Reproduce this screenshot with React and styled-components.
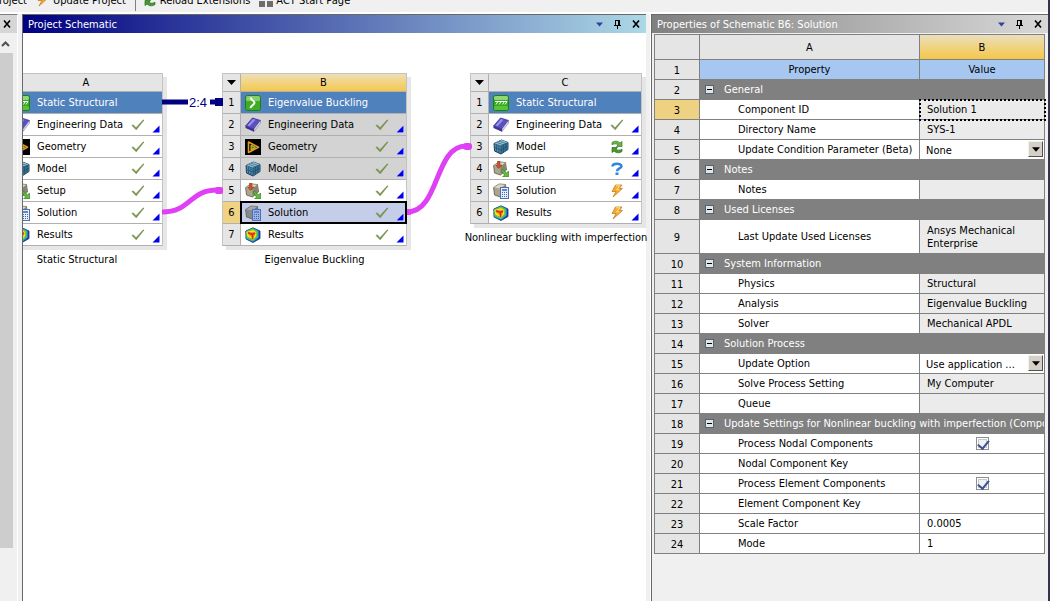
import { useState } from "react";
import styled, { createGlobalStyle, css } from "styled-components";

const GlobalStyle = createGlobalStyle`
  * {
    box-sizing: border-box;
  }
  body {
    margin: 0;
    overflow: hidden;
    background: #f0f0f0;
    color: #000;
    font-family: Tahoma, "DejaVu Sans Condensed", "Noto Sans", sans-serif;
    font-size: 11px;
    line-height: 13px;
  }
  button, select, input {
    font: inherit;
    color: inherit;
    margin: 0;
    padding: 0;
  }
  button {
    border: 0;
    background: none;
  }
`;

/* ---------- icons ---------- */

const StructuralIcon = () => (
  <svg width="16" height="16" viewBox="0 0 16 16">
    <rect x="0.5" y="0.5" width="15" height="15" rx="2" fill="#36a81f" stroke="#1d7f16" />
    <rect x="1" y="1" width="14" height="4" rx="1.5" fill="#8fd873" />
    <rect x="1" y="11" width="14" height="4" rx="1.5" fill="#56c52e" />
    <path d="M2 6.5h12" stroke="#fff" />
    <path d="M3 9.5l2-3M6.200 9.500l2-3M9.400 9.500l2-3M12 9.500l2-3" stroke="#fff" />
  </svg>
);

const BucklingIcon = () => (
  <svg width="16" height="16" viewBox="0 0 16 16">
    <rect x="0.5" y="0.5" width="15" height="15" rx="2" fill="#3dad22" stroke="#1d7f16" />
    <rect x="1" y="1" width="14" height="5" rx="1.5" fill="#85cf68" />
    <path d="M5.500 2.500C6 5 9.500 6 9.500 7.800S6 10.500 5.500 13" fill="none" stroke="#fff" strokeWidth="2" />
  </svg>
);

const BookIcon = () => (
  <svg width="16" height="16" viewBox="0 0 16 16">
    <path d="M0.500 9L7.500 1l8 2.500L9 12z" fill="#5a50c0" stroke="#3a2f96" strokeWidth="0.8" />
    <path d="M2.500 8.500l5.500-6.500 2.500 0.800-6 6.500z" fill="#9a92ea" />
    <path d="M9 12l6.500-8.500v2.500L9 14.500z" fill="#e4e4f2" stroke="#7a73b0" strokeWidth="0.6" />
    <path d="M0.500 9v2L9 14.800V12z" fill="#3c3191" />
  </svg>
);

const GeometryIcon = () => (
  <svg width="16" height="16" viewBox="0 0 16 16">
    <rect width="16" height="16" fill="#000" />
    <path d="M3.500 3v10.500L13.500 8.200z" fill="#000" stroke="#e39a1c" strokeWidth="1.6" strokeLinejoin="round" />
    <path d="M6 6v5l4.500-2.700z" fill="#2f9e3c" stroke="#e8bd2e" strokeWidth="1" />
  </svg>
);

const ModelIcon = () => (
  <svg width="16" height="16" viewBox="0 0 16 16">
    <path d="M1 4.500L8.500 1 15 3.500v7L8 15 1.500 12z" fill="#4a89ae" stroke="#1f4258" strokeLinejoin="round" />
    <path d="M1 4.500L8.500 1 15 3.500 8 7z" fill="#8fc4df" />
    <path d="M8 7l7-3.500v7L8 15z" fill="#356f93" />
    <path
      d="M1 4.500L8 7l7-3.500M8 7v8M1.200 8.200L8 11l7-4M3.500 5.500v7M5.800 6.200V14M10.500 5.800v7.700M13 4.500v7.200M3.500 3.400L10.500 5.800M6 2.200l7 2.300"
      fill="none"
      stroke="#20485f"
      strokeWidth="0.6"
    />
  </svg>
);

const Block = ({ dim }) => (
  <>
    <path
      d="M0.600 4.500L6 1l6.500 0.500L13.500 9 7.500 14l-6-2z"
      fill={dim ? "#85888c" : "#aaa58e"}
      stroke="#5c5848"
      strokeWidth="0.8"
      strokeLinejoin="round"
    />
    <path d="M1 4.500L6 1.300l6.300 0.500L7.500 5.500z" fill={dim ? "#a3a7ad" : "#dbd7c4"} />
    <path d="M7.500 5.500l4.800-3.600 0.900 7L7.500 13.600z" fill={dim ? "#6d7076" : "#8a8570"} />
  </>
);

const SetupIcon = () => (
  <svg width="16" height="16" viewBox="0 0 16 16">
    <Block />
    <path d="M4.500 0h2.500v4h2L5.700 7.500 2.500 4h2z" fill="#c9512c" stroke="#8d3218" strokeWidth="0.5" />
    <path
      d="M8 9.300L9.500 8l4 4 2-2v6H9.500l2-2z"
      fill="#62b93a"
      stroke="#2b7418"
      strokeWidth="0.6"
      strokeLinejoin="round"
    />
  </svg>
);

const SolutionIcon = ({ dim }) => (
  <svg width="16" height="16" viewBox="0 0 16 16">
    <Block dim={dim} />
    <rect x="7.5" y="4.5" width="8" height="11" fill={dim ? "#9db1e2" : "#e6eefc"} stroke="#4a70b5" />
    <rect x="9" y="6" width="5" height="2" fill="#5f86cc" />
    <path d="M9 9.500h5M9 11.500h5M9 13.500h5" stroke="#4468ae" strokeDasharray="1 1" />
  </svg>
);

const ResultsIcon = () => (
  <svg width="16" height="16" viewBox="0 0 16 16">
    <path d="M0.800 4L8 0.800 15 4v7.500L8 15.500 1 12z" fill="#2445b8" stroke="#1b2f70" strokeWidth="0.8" />
    <path d="M1 4.200L8 1l5.500 3v6.500L8 14.800 1.300 11.800z" fill="#28b8b0" />
    <path d="M1.200 4.400L8 1.500l4.200 2.800v5.500L8 13.500 2 11z" fill="#6cc62c" />
    <path d="M1.500 5L8 3l3.200 2v4L8 12.500 2.300 9.500z" fill="#f7e11f" />
    <path d="M2.500 5.500L7.500 5l3 0.500-0.800 3L8 11.500 6 9.500 3.500 8z" fill="#f39220" />
    <path d="M3 5.800l4.500 1.700L10 6M7.500 7.500V12" fill="none" stroke="#d42a12" strokeWidth="1.5" />
  </svg>
);

const CheckIcon = () => (
  <svg width="14" height="12" viewBox="0 0 14 12">
    <path d="M1 6.500l1.300-.6L5 8.800 12.200 1h0.800L5.200 10.800z" fill="#7f9a50" stroke="#66803c" strokeWidth="0.6" />
  </svg>
);

const RefreshIcon = () => (
  <svg width="14" height="14" viewBox="0 0 14 14">
    <path
      d="M2 2.500C5 0.500 8 1 10 3L12 1.500V6.500H6.500l1.700-1.700C6.500 3.600 4 3.500 2 4.800z"
      fill="#6cb544"
      stroke="#37761f"
      strokeWidth="0.7"
    />
    <path
      d="M12 11.500C9 13.500 6 13 4 11L2 12.500V7.500h5.500L5.800 9.200C7.500 10.400 10 10.500 12 9.200z"
      fill="#459c2c"
      stroke="#2c691a"
      strokeWidth="0.7"
    />
  </svg>
);

const QuestionIcon = () => (
  <svg width="14" height="14" viewBox="0 0 14 14">
    <path
      d="M2.500 4.500C2.500 0.800 11.500 0.800 11.500 4.200c0 2.300-4.500 2.200-4.500 5"
      fill="none"
      stroke="#2f86e0"
      strokeWidth="2.5"
    />
    <rect x="5.5" y="10.5" width="3" height="2.500" fill="#2f86e0" />
  </svg>
);

const BoltIcon = () => (
  <svg width="14" height="14" viewBox="0 0 14 14">
    <path d="M5.500 1H12L9.500 4.500H12.500L3 13l3-5.500H2z" fill="#f5ab2e" stroke="#bf7618" strokeWidth="0.7" />
    <path d="M6 1.800h4L6.500 5.800h3" fill="none" stroke="#ffe08a" />
  </svg>
);

const CaretIcon = ({ color = "#000", size = 9 }) => (
  <svg width={size} height="5" viewBox="0 0 9 5">
    <path d="M0 0h9L4.500 5z" fill={color} />
  </svg>
);

const PinIcon = () => (
  <svg width="7" height="9" viewBox="0 0 7 9" shapeRendering="crispEdges">
    <path d="M1 0h5v5h1v1H4v3H3V6H0V5h1zM2 1v4h2V1z" fill="#000" fillRule="evenodd" />
  </svg>
);

const CloseIcon = () => (
  <svg width="8" height="8" viewBox="0 0 8 8">
    <path d="M1 0.500l6 7M7 0.500l-6 7" stroke="#000" strokeWidth="1.6" />
  </svg>
);

const TilesIcon = () => (
  <svg width="14" height="13" viewBox="0 0 14 13">
    <path d="M0 0h6v6H0zM8 0h6v6H8zM0 7h6v6H0zM8 7h6v6H8z" fill="#6d6d6d" />
  </svg>
);

const ICONS = {
  structural: StructuralIcon,
  buckling: BucklingIcon,
  book: BookIcon,
  geometry: GeometryIcon,
  model: ModelIcon,
  setup: SetupIcon,
  solution: SolutionIcon,
  results: ResultsIcon,
};

const STATUS = {
  ok: CheckIcon,
  refresh: RefreshIcon,
  unknown: QuestionIcon,
  update: BoltIcon,
};

/* ---------- data ---------- */

const SYSTEMS = [
  {
    id: "A",
    left: -32,
    width: 172,
    name: "Static Structural",
    rows: [
      { icon: "structural", label: "Static Structural" },
      { icon: "book", label: "Engineering Data", status: "ok" },
      { icon: "geometry", label: "Geometry", status: "ok" },
      { icon: "model", label: "Model", status: "ok" },
      { icon: "setup", label: "Setup", status: "ok" },
      { icon: "solution", label: "Solution", status: "ok" },
      { icon: "results", label: "Results", status: "ok" },
    ],
  },
  {
    id: "B",
    left: 199,
    width: 185,
    active: true,
    name: "Eigenvalue Buckling",
    rows: [
      { icon: "buckling", label: "Eigenvalue Buckling" },
      { icon: "book", label: "Engineering Data", status: "ok", shared: true },
      { icon: "geometry", label: "Geometry", status: "ok", shared: true },
      { icon: "model", label: "Model", status: "ok", shared: true },
      { icon: "setup", label: "Setup", status: "ok" },
      { icon: "solution", label: "Solution", status: "ok", selected: true },
      { icon: "results", label: "Results", status: "ok" },
    ],
  },
  {
    id: "C",
    left: 447,
    width: 172,
    name: "Nonlinear buckling with imperfection",
    rows: [
      { icon: "structural", label: "Static Structural" },
      { icon: "book", label: "Engineering Data", status: "ok" },
      { icon: "model", label: "Model", status: "refresh" },
      { icon: "setup", label: "Setup", status: "unknown" },
      { icon: "solution", label: "Solution", status: "update" },
      { icon: "results", label: "Results", status: "update" },
    ],
  },
];

const PROPERTIES = [
  { group: "General" },
  { name: "Component ID", value: "Solution 1", readOnly: true, selected: true },
  { name: "Directory Name", value: "SYS-1", readOnly: true },
  { name: "Update Condition Parameter (Beta)", options: ["None"] },
  { group: "Notes" },
  { name: "Notes", value: "", readOnly: true },
  { group: "Used Licenses" },
  { name: "Last Update Used Licenses", value: "Ansys Mechanical Enterprise", readOnly: true, tall: true },
  { group: "System Information" },
  { name: "Physics", value: "Structural", readOnly: true },
  { name: "Analysis", value: "Eigenvalue Buckling", readOnly: true },
  { name: "Solver", value: "Mechanical APDL", readOnly: true },
  { group: "Solution Process" },
  { name: "Update Option", options: ["Use application ..."] },
  { name: "Solve Process Setting", value: "My Computer", readOnly: true },
  { name: "Queue", value: "", readOnly: true },
  { group: "Update Settings for Nonlinear buckling with imperfection (Component)" },
  { name: "Process Nodal Components", checked: true },
  { name: "Nodal Component Key", value: "" },
  { name: "Process Element Components", checked: true },
  { name: "Element Component Key", value: "" },
  { name: "Scale Factor", value: "0.0005" },
  { name: "Mode", value: "1" },
];

/* ---------- components ---------- */

function PanelControls() {
  return (
    <Controls>
      <IconButton aria-label="Menu">
        <CaretIcon color="#33409c" size={7} />
      </IconButton>
      <IconButton aria-label="Pin">
        <PinIcon />
      </IconButton>
      <IconButton aria-label="Close">
        <CloseIcon />
      </IconButton>
    </Controls>
  );
}

function System({ system }) {
  return (
    <Node $left={system.left} $width={system.width}>
      <Card>
        <CardRow $header>
          <CardIndex as="button" aria-label={`System ${system.id} menu`}>
            <CaretIcon />
          </CardIndex>
          <CardLetter $active={system.active}>{system.id}</CardLetter>
        </CardRow>
        {system.rows.map((row, i) => {
          const Icon = ICONS[row.icon];
          const Status = STATUS[row.status];
          return (
            <CardRow key={row.label + i}>
              <CardIndex $selected={row.selected}>{i + 1}</CardIndex>
              <Cell $title={i === 0} $shared={row.shared} $selected={row.selected}>
                <Icon dim={row.selected} />
                <CellLabel>{row.label}</CellLabel>
                {Status && <Status />}
                {Status && (
                  <Corner viewBox="0 0 8 8">
                    <path d="M8 0v8H0z" fill="#fff" />
                    <path d="M7.500 0.500v7h-7z" fill="#0000f0" />
                  </Corner>
                )}
              </Cell>
            </CardRow>
          );
        })}
      </Card>
      <Caption>{system.name}</Caption>
    </Node>
  );
}

function Links() {
  return (
    <LinkLayer width="623" height="300">
      <path d="M139 69h26M187 69h6" stroke="#000080" strokeWidth="5" />
      <rect x="192" y="65" width="8" height="8" fill="#000080" />
      <text x="166" y="74" fill="#000080" fontFamily="Liberation Sans, Arial, sans-serif" fontSize="13">
        2:4
      </text>
      <g fill="none" stroke="#e040f5" strokeWidth="5">
        <path d="M139 179C168 179 166 157 194 157" />
        <path d="M384 179C417 179 411 113 443 113" />
      </g>
      <g fill="#e040f5">
        <rect x="192" y="154" width="8" height="7" rx="2" />
        <rect x="440" y="110" width="9" height="7" rx="3" />
        <rect x="384" y="176" width="4" height="6" />
      </g>
    </LinkLayer>
  );
}

function PropertyValue({ prop, id }) {
  const [checked, setChecked] = useState(Boolean(prop.checked));

  if (prop.options) {
    return (
      <SelectWrap>
        <Select id={id}>
          {prop.options.map((o) => (
            <option key={o}>{o}</option>
          ))}
        </Select>
        <SelectArrow>
          <CaretIcon size={8} />
        </SelectArrow>
      </SelectWrap>
    );
  }
  if ("checked" in prop) {
    return <Checkbox id={id} type="checkbox" checked={checked} onChange={() => setChecked(!checked)} />;
  }
  if (prop.readOnly) {
    return prop.value;
  }
  return <TextInput id={id} type="text" defaultValue={prop.value} />;
}

function PropertyTable() {
  return (
    <TableWrap>
      <Table>
        <colgroup>
          <IndexCol />
          <NameCol />
          <col />
        </colgroup>
        <thead>
          <tr>
            <HeadCell />
            <HeadCell>A</HeadCell>
            <HeadCell $active>B</HeadCell>
          </tr>
          <tr>
            <NumberCell>1</NumberCell>
            <TitleCell>Property</TitleCell>
            <TitleCell>Value</TitleCell>
          </tr>
        </thead>
        <tbody>
          {PROPERTIES.map((prop, i) => {
            const id = `prop-${i + 2}`;
            return (
              <tr key={id}>
                <NumberCell $selected={prop.selected}>{i + 2}</NumberCell>
                {prop.group ? (
                  <GroupCell colSpan={2}>
                    <GroupInner>
                      <Expander aria-label={`Collapse ${prop.group}`} />
                      {prop.group}
                    </GroupInner>
                  </GroupCell>
                ) : (
                  <>
                    <NameCell $tall={prop.tall}>
                      {prop.readOnly ? prop.name : <label htmlFor={id}>{prop.name}</label>}
                    </NameCell>
                    <ValueCell
                      $readOnly={prop.readOnly}
                      $selected={prop.selected}
                      $center={"checked" in prop}
                      $flush={Boolean(prop.options)}>
                      <PropertyValue prop={prop} id={id} />
                    </ValueCell>
                  </>
                )}
              </tr>
            );
          })}
        </tbody>
      </Table>
    </TableWrap>
  );
}

function App() {
  return (
    <Page>
      <GlobalStyle />
      <Toolbar>
        <ToolButton $clipped>Refresh Project</ToolButton>
        <ToolButton>
          <BoltIcon />
          Update Project
        </ToolButton>
        <ToolDivider />
        <ToolButton>
          <RefreshIcon />
          Reload Extensions
        </ToolButton>
        <ToolButton>
          <TilesIcon />
          ACT Start Page
        </ToolButton>
      </Toolbar>
      <Workspace>
        <Sidebar>
          <SidebarTitle>
            <IconButton aria-label="Close toolbox">
              <CloseIcon />
            </IconButton>
          </SidebarTitle>
          <ScrollTrack>
            <ScrollUp aria-label="Scroll up">
              <svg width="9" height="6" viewBox="0 0 9 6">
                <path d="M1 5l3.500-3.500L8 5" fill="none" stroke="#505050" strokeWidth="2" />
              </svg>
            </ScrollUp>
            <ScrollThumb />
          </ScrollTrack>
        </Sidebar>
        <Schematic>
          <SchematicTitle>
            Project Schematic
            <PanelControls />
          </SchematicTitle>
          <Canvas>
            {SYSTEMS.map((s) => (
              <System key={s.id} system={s} />
            ))}
            <Links />
          </Canvas>
        </Schematic>
        <Properties>
          <PropertiesTitle>
            Properties of Schematic B6: Solution
            <PanelControls />
          </PropertiesTitle>
          <PropertyTable />
        </Properties>
      </Workspace>
    </Page>
  );
}

/* ---------- styles ---------- */

const Page = styled.div`
  display: flex;
  flex-direction: column;
  height: 100vh;
  border-right: 2px solid #33334d;
`;

const Toolbar = styled.div`
  display: flex;
  align-items: flex-end;
  flex: none;
  height: 14px;
  padding-bottom: 5px;
  border-bottom: 2px solid #fff;
  overflow: hidden;
`;

const ToolButton = styled.button`
  display: flex;
  align-items: flex-end;
  gap: 3px;
  flex: none;
  margin-right: 9px;
  white-space: nowrap;
  ${(p) =>
    p.$clipped &&
    css`
      justify-content: flex-end;
      width: 27px;
      overflow: hidden;
    `}
`;

const ToolDivider = styled.div`
  width: 1px;
  height: 20px;
  margin-right: 7px;
  margin-bottom: -4px;
  flex: none;
  background: #808080;
`;

const Workspace = styled.div`
  display: flex;
  flex: 1;
  min-height: 0;
`;

const Sidebar = styled.div`
  display: flex;
  flex-direction: column;
  flex: none;
  width: 18px;
  margin-right: 4px;
  border-top: 1px solid #808080;
  border-right: 1px solid #fff;
`;

const SidebarTitle = styled.div`
  display: flex;
  align-items: center;
  height: 18px;
  padding-left: 3px;
  background: #d6d6d6;
`;

const ScrollTrack = styled.div`
  display: flex;
  flex-direction: column;
  flex: 1;
  width: 13px;
`;

const ScrollUp = styled.button`
  height: 20px;
  padding-right: 3px;
`;

const ScrollThumb = styled.div`
  height: 495px;
  background: #cdcdcd;
`;

const Panel = styled.section`
  display: flex;
  flex-direction: column;
  border-top: 1px solid #696969;
  border-left: 1px solid #696969;
  min-width: 0;
`;

const Schematic = styled(Panel)`
  flex: 1;
  margin-right: 5px;
`;

const Properties = styled(Panel)`
  flex: none;
  width: 397px;
  box-shadow: -1px 0 0 #fff;
`;

const PanelTitle = styled.header`
  display: flex;
  align-items: center;
  justify-content: space-between;
  flex: none;
  height: 18px;
  padding: 0 6px 0 5px;
  color: #fff;
`;

const SchematicTitle = styled(PanelTitle)`
  background: linear-gradient(to right, #000080, #add8e6);
`;

const PropertiesTitle = styled(PanelTitle)`
  background: linear-gradient(to right, #808080, #d8d8d8);
`;

const Controls = styled.div`
  display: flex;
  align-items: center;
  gap: 11px;
`;

const IconButton = styled.button`
  display: flex;
  align-items: center;
`;

/* long captions may run a little past the right side of the canvas */
const Canvas = styled.div`
  position: relative;
  flex: 1;
  background: #fff;
  clip-path: inset(0 -4px 0 0);
`;

const Node = styled.div`
  position: absolute;
  top: 40px;
  left: ${(p) => p.$left}px;
  width: ${(p) => p.$width}px;
`;

const Card = styled.div`
  border: 1px solid #c3c3c3;
  border-bottom: 0;
  box-shadow: 4px 4px 0 #e6e6e6;
  background: #fff;
`;

const CardRow = styled.div`
  display: flex;
  height: ${(p) => (p.$header ? 18 : 22)}px;
  border-bottom: 1px solid #b0b0b0;
`;

const CardIndex = styled.div`
  display: flex;
  align-items: center;
  justify-content: center;
  flex: none;
  width: 18px;
  border-right: 1px solid #b0b0b0;
  background: ${(p) => (p.$selected ? "#f0d283" : "#e5e5e5")};
`;

const CardLetter = styled.div`
  flex: 1;
  line-height: 17px;
  text-align: center;
  background: ${(p) => (p.$active ? "linear-gradient(#efdfb8, #f5c84c)" : "#e5e5e5")};
`;

const Cell = styled.div`
  position: relative;
  display: flex;
  align-items: center;
  flex: 1;
  min-width: 0;
  padding: 0 17px 0 4px;
  background: ${(p) => (p.$shared ? "#d3d3d3" : "#fff")};
  ${(p) =>
    p.$title &&
    css`
      background: #4f81bd;
      color: #fff;
    `}
  ${(p) =>
    p.$selected &&
    css`
      background: #c5cee8;
      outline: 2px solid #000;
      outline-offset: -1px;
      z-index: 1;
    `}
`;

const CellLabel = styled.span`
  flex: 1;
  margin-left: 7px;
  white-space: nowrap;
`;

const Corner = styled.svg`
  position: absolute;
  right: 2px;
  bottom: 2px;
  width: 8px;
  height: 8px;
`;

const Caption = styled.div`
  display: flex;
  justify-content: center;
  margin-top: 7px;
  white-space: nowrap;
`;

const LinkLayer = styled.svg`
  position: absolute;
  top: 0;
  left: 0;
  z-index: 2;
  pointer-events: none;
`;

const TableWrap = styled.div`
  padding: 1px 3px 0 2px;
`;

const Table = styled.table`
  table-layout: fixed;
  width: 100%;
  border-spacing: 0;
  border-top: 1px solid #808080;
  border-left: 1px solid #808080;
`;

const IndexCol = styled.col`
  width: 45px;
`;

const NameCol = styled.col`
  width: 220px;
`;

const cell = css`
  height: 20px;
  padding: 0;
  border-right: 1px solid #808080;
  border-bottom: 1px solid #808080;
  font-weight: normal;
`;

const HeadCell = styled.th`
  ${cell}
  height: 25px;
  background: ${(p) => (p.$active ? "linear-gradient(#eadfbd, #f5c749)" : "#e5e5e5")};
`;

const NumberCell = styled.th`
  ${cell}
  padding-top: 1px;
  background: ${(p) => (p.$selected ? "#efd281" : "#e5e5e5")};
`;

const TitleCell = styled.th`
  ${cell}
  background: #a5c7f0;
`;

const GroupCell = styled.td`
  ${cell}
  background: #808080;
  color: #fff;
  overflow: hidden;
`;

const GroupInner = styled.div`
  display: flex;
  align-items: center;
  gap: 10px;
  padding-left: 5px;
  white-space: nowrap;
`;

const Expander = styled.button`
  flex: none;
  width: 9px;
  height: 9px;
  border: 1px solid #4a6484;
  background: linear-gradient(#000, #000) center / 5px 1px no-repeat, #e6e4de;
`;

const NameCell = styled.td`
  ${cell}
  height: ${(p) => (p.$tall ? 34 : 20)}px;
  padding-left: 38px;
  background: #fff;
  white-space: nowrap;
`;

const ValueCell = styled.td`
  ${cell}
  padding: ${(p) => (p.$flush ? "0" : "0 7px")};
  background: ${(p) => (p.$readOnly ? "#ebebeb" : "#fff")};
  text-align: ${(p) => (p.$center ? "center" : "left")};
  ${(p) =>
    p.$selected &&
    css`
      outline: 2px dotted #000;
      outline-offset: -1px;
    `}
`;

const SelectWrap = styled.div`
  position: relative;
  display: flex;
  height: 19px;
`;

const Select = styled.select`
  appearance: none;
  flex: 1;
  min-width: 0;
  padding: 1px 18px 0 6px;
  border: 0;
  border-radius: 0;
  background: transparent;
`;

const SelectArrow = styled.span`
  position: absolute;
  top: 1px;
  right: 1px;
  display: flex;
  align-items: center;
  justify-content: center;
  width: 15px;
  height: 16px;
  border: 1px solid;
  border-color: #f4f2ee #505050 #505050 #f4f2ee;
  background: #d4d0c8;
  pointer-events: none;
`;

const Checkbox = styled.input`
  appearance: none;
  display: block;
  width: 13px;
  height: 13px;
  margin: 0 auto;
  border: 1px solid #8e8f8f;
  background: #f0f2f5;
  box-shadow: inset 0 0 0 1px #fff, inset 0 0 0 2px #c4cad2;
  &:checked::after {
    content: "";
    display: block;
    width: 5px;
    height: 9px;
    margin: 0 0 0 3px;
    border: solid #3c4f92;
    border-width: 0 2px 2px 0;
    transform: rotate(40deg);
  }
`;

const TextInput = styled.input`
  display: block;
  width: 100%;
  height: 17px;
  border: 0;
  background: transparent;
  outline: none;
`;

export default App;
